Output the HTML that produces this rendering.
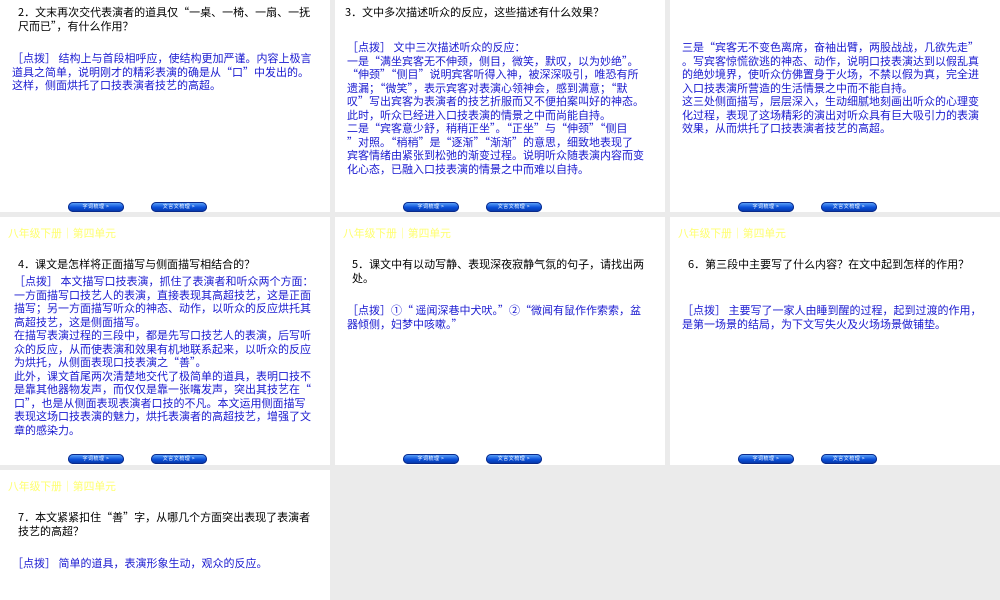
<!DOCTYPE html>
<html style="width:1000px;height:600px;overflow:hidden"><head><meta charset="utf-8"><style>
*{margin:0;padding:0}
body{width:1000px;height:600px;background:#ebebeb;position:relative;overflow:hidden;font-family:"Noto Sans CJK SC","WenQuanYi Zen Hei","Liberation Sans",sans-serif}
.s{position:absolute;background:#fff;width:330px;height:248px;overflow:hidden}
.t{position:absolute;font-size:11px;line-height:13.5px;white-space:nowrap}
.q{color:#000}
.b{color:#1a1ad0}
.h{position:absolute;left:8px;top:8px;font-size:10.8px;color:#ffff70;white-space:nowrap}
.btn{position:absolute;width:56px;height:10px;border-radius:5px;background:linear-gradient(#6ab0ff,#0a4fd8 55%,#0633a0);box-shadow:0 0 0 1px #0a2a8a inset;font-size:5px;color:#fff;line-height:10px;text-align:center;letter-spacing:.5px}
</style></head><body>

<div class="s" style="left:0;top:-36px">
<div class="t q" style="left:18px;top:42px">2．文末再次交代表演者的道具仅“一桌、一椅、一扇、一抚<br>尺而已”，有什么作用？</div>
<div class="t b" style="left:12px;top:88px">［点拨］ 结构上与首段相呼应，使结构更加严谨。内容上极言<br>道具之简单，说明刚才的精彩表演的确是从“口”中发出的。<br>这样，侧面烘托了口技表演者技艺的高超。</div>
<div class="btn" style="left:68px;top:238px">字词梳理 &gt;</div><div class="btn" style="left:151px;top:238px">文言文梳理 &gt;</div>
</div>

<div class="s" style="left:335px;top:-36px">
<div class="t q" style="left:10px;top:42px">3．文中多次描述听众的反应，这些描述有什么效果？</div>
<div class="t b" style="left:12px;top:77px">［点拨］ 文中三次描述听众的反应：<br>一是“满坐宾客无不伸颈，侧目，微笑，默叹，以为妙绝”。<br>“伸颈”“侧目”说明宾客听得入神，被深深吸引，唯恐有所<br>遗漏；“微笑”，表示宾客对表演心领神会，感到满意；“默<br>叹”写出宾客为表演者的技艺折服而又不便拍案叫好的神态。<br>此时，听众已经进入口技表演的情景之中而尚能自持。<br>二是“宾客意少舒，稍稍正坐”。“正坐”与“伸颈”“侧目<br>”对照。“稍稍”是“逐渐”“渐渐”的意思，细致地表现了<br>宾客情绪由紧张到松弛的渐变过程。说明听众随表演内容而变<br>化心态，已融入口技表演的情景之中而难以自持。</div>
<div class="btn" style="left:68px;top:238px">字词梳理 &gt;</div><div class="btn" style="left:151px;top:238px">文言文梳理 &gt;</div>
</div>

<div class="s" style="left:670px;top:-36px">
<div class="t b" style="left:12px;top:77px">三是“宾客无不变色离席，奋袖出臂，两股战战，几欲先走”<br>。写宾客惊慌欲逃的神态、动作，说明口技表演达到以假乱真<br>的绝妙境界，使听众仿佛置身于火场，不禁以假为真，完全进<br>入口技表演所营造的生活情景之中而不能自持。<br>这三处侧面描写，层层深入，生动细腻地刻画出听众的心理变<br>化过程，表现了这场精彩的演出对听众具有巨大吸引力的表演<br>效果，从而烘托了口技表演者技艺的高超。</div>
<div class="btn" style="left:68px;top:238px">字词梳理 &gt;</div><div class="btn" style="left:151px;top:238px">文言文梳理 &gt;</div>
</div>

<div class="s" style="left:0;top:217px">
<div class="h">八年级下册｜第四单元</div>
<div class="t q" style="left:18px;top:41px">4．课文是怎样将正面描写与侧面描写相结合的？</div>
<div class="t b" style="left:14px;top:58px">［点拨］ 本文描写口技表演，抓住了表演者和听众两个方面：<br>一方面描写口技艺人的表演，直接表现其高超技艺，这是正面<br>描写；另一方面描写听众的神态、动作，以听众的反应烘托其<br>高超技艺，这是侧面描写。<br>在描写表演过程的三段中，都是先写口技艺人的表演，后写听<br>众的反应，从而使表演和效果有机地联系起来，以听众的反应<br>为烘托，从侧面表现口技表演之“善”。<br>此外，课文首尾两次清楚地交代了极简单的道具，表明口技不<br>是靠其他器物发声，而仅仅是靠一张嘴发声，突出其技艺在“<br>口”，也是从侧面表现表演者口技的不凡。本文运用侧面描写<br>表现这场口技表演的魅力，烘托表演者的高超技艺，增强了文<br>章的感染力。</div>
<div class="btn" style="left:68px;top:237px">字词梳理 &gt;</div><div class="btn" style="left:151px;top:237px">文言文梳理 &gt;</div>
</div>

<div class="s" style="left:335px;top:217px">
<div class="h">八年级下册｜第四单元</div>
<div class="t q" style="left:17px;top:41px">5．课文中有以动写静、表现深夜寂静气氛的句子，请找出两<br>处。</div>
<div class="t b" style="left:12px;top:87px">［点拨］①“ 遥闻深巷中犬吠。”②“微闻有鼠作作索索，盆<br>器倾侧，妇梦中咳嗽。”</div>
<div class="btn" style="left:68px;top:237px">字词梳理 &gt;</div><div class="btn" style="left:151px;top:237px">文言文梳理 &gt;</div>
</div>

<div class="s" style="left:670px;top:217px">
<div class="h">八年级下册｜第四单元</div>
<div class="t q" style="left:18px;top:41px">6．第三段中主要写了什么内容？在文中起到怎样的作用？</div>
<div class="t b" style="left:12px;top:87px">［点拨］ 主要写了一家人由睡到醒的过程，起到过渡的作用，<br>是第一场景的结局，为下文写失火及火场场景做铺垫。</div>
<div class="btn" style="left:68px;top:237px">字词梳理 &gt;</div><div class="btn" style="left:151px;top:237px">文言文梳理 &gt;</div>
</div>

<div class="s" style="left:0;top:470px;height:130px">
<div class="h">八年级下册｜第四单元</div>
<div class="t q" style="left:18px;top:41px">7．本文紧紧扣住“善”字，从哪几个方面突出表现了表演者<br>技艺的高超？</div>
<div class="t b" style="left:12px;top:87px">［点拨］ 简单的道具，表演形象生动，观众的反应。</div>
</div>

</body></html>
